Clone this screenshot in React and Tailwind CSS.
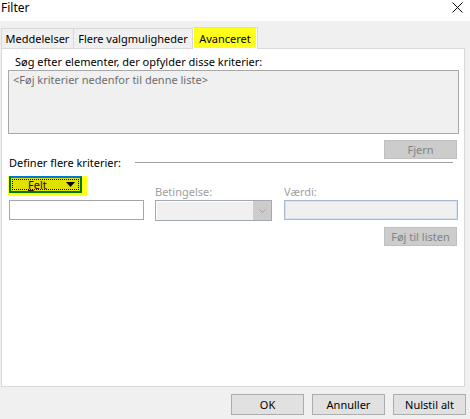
import React from "react";

const font = { fontFamily: '"Noto Sans", "Open Sans", sans-serif' };

function DisabledButton({ children }) {
  return (
    <div className="w-[73px] h-[19px] bg-[#cccccc] border border-[#bfbfbf] flex items-center justify-center text-[11px] leading-[15px] text-[#838383]">
      {children}
    </div>
  );
}

function Button({ children }) {
  return (
    <div className="w-[73px] h-[21px] bg-[#e1e1e1] border border-[#adadad] flex items-center justify-center text-[11px] leading-[15px] text-black">
      {children}
    </div>
  );
}

export default function App() {
  return (
    <div
      className="w-[470px] h-[419px] bg-[#f0f0f0] flex flex-col overflow-hidden text-black"
      style={font}
    >
      {/* Title bar */}
      <div className="h-[21px] bg-white flex items-start justify-between pl-[1px] pr-[7px] shrink-0">
        <span className="text-[12px] leading-[15px]">Filter</span>
        <svg width="11" height="11" viewBox="0 0 11 11" className="mt-[2px]">
          <path d="M0.5 0.5 L10.5 10.5 M10.5 0.5 L0.5 10.5" stroke="#000" strokeWidth="1" />
        </svg>
      </div>

      {/* Tabs */}
      <div className="flex items-end h-[27px] pl-[1px] shrink-0 relative z-10">
        <div className="h-[20px] w-[73px] border border-[#d9d9d9] border-b-0 bg-[#f0f0f0] flex items-center justify-center text-[11px] leading-[15px]">
          Meddelelser
        </div>
        <div className="h-[20px] w-[119px] border border-[#d9d9d9] border-b-0 border-l-0 bg-[#f0f0f0] flex items-center justify-center text-[11px] leading-[15px]">
          Flere valgmuligheder
        </div>
        <div className="h-[22px] w-[65px] border border-[#d9d9d9] border-b-0 border-l-0 bg-white flex items-start mb-[-1px]">
          <div className="h-[20px] w-[62px] ml-[1px] bg-[#ffff1a] flex items-center justify-center text-[11px] leading-[15px]">
            Avanceret
          </div>
        </div>
      </div>

      {/* Panel */}
      <div className="ml-[1px] w-[464px] h-[339px] bg-white border border-[#d9d9d9] shrink-0 flex flex-col">
        <div className="ml-[13px] mt-[5px] text-[11px] leading-[15px]">
          Søg efter elementer, der opfylder disse kriterier:
        </div>
        <div className="ml-[6px] mt-[1px] w-[451px] h-[64px] bg-[#f0f0f0] border border-[#a8a8a8] px-[4px] pt-[1px] text-[11px] leading-[15px] text-[#6d6d6d]">
          &lt;Føj kriterier nedenfor til denne liste&gt;
        </div>
        <div className="flex justify-end pr-[7px] mt-[6px]">
          <DisabledButton>Fjern</DisabledButton>
        </div>
        <div className="flex items-center ml-[7px] mr-[11px] mt-[-4px] h-[15px]">
          <span className="text-[11px] leading-[15px]">Definer flere kriterier:</span>
          <div className="ml-auto w-[318px] h-px bg-[#a0a0a0]"></div>
        </div>

        <div className="flex ml-[7px] mt-[6px]">
          {/* col 1 */}
          <div className="w-[135px] flex flex-col">
            <div className="w-[79px] h-[20px] bg-[#ffff1a] ml-[-1px]">
              <div className="ml-[1px] w-[73px] h-[17px] bg-[#e1e100] border-2 border-[#007800] border-t-[#0078d7] flex">
                <div className="m-[1px] flex-1 border border-dotted border-black flex items-center pl-[15px] pr-[3px]">
                  <span className="text-[11px] leading-[12px] text-[#3a0000]">
                    <span className="underline">F</span>elt
                  </span>
                  <svg width="9" height="5" viewBox="0 0 9 5" className="ml-auto">
                    <path d="M0 0 H9 L4.5 5 Z" fill="#000" />
                  </svg>
                </div>
              </div>
            </div>
            <div className="mt-[4px] w-[135px] h-[20px] border border-[#a6a6a6] bg-white"></div>
          </div>
          {/* col 2 */}
          <div className="w-[117px] ml-[11px] flex flex-col">
            <div className="h-[24px] flex items-end pb-[1px] text-[11px] leading-[15px] text-[#a0a0a0]">
              Betingelse:
            </div>
            <div className="w-[117px] h-[21px] border border-[#a3a8b7] bg-[#f0f0f0] flex">
              <div className="flex-1 border-t border-l border-white"></div>
              <div className="w-[18px] bg-[#cccccc] flex items-center justify-center">
                <svg width="7" height="4" viewBox="0 0 7 4">
                  <path d="M0.5 0.5 L3.5 3.5 L6.5 0.5" stroke="#a0a0a0" strokeWidth="1" fill="none" />
                </svg>
              </div>
            </div>
          </div>
          {/* col 3 */}
          <div className="w-[174px] ml-[12px] flex flex-col">
            <div className="h-[24px] flex items-end pb-[1px] text-[11px] leading-[15px] text-[#a0a0a0]">
              Værdi:
            </div>
            <div className="w-[174px] h-[20px] border border-[#a9b7cf] bg-[#f0f0f0]">
              <div className="w-full h-full border border-[#d5e3f3]"></div>
            </div>
            <div className="flex justify-end mt-[7px] mr-[1px]">
              <DisabledButton>Føj til listen</DisabledButton>
            </div>
          </div>
        </div>
      </div>

      {/* Bottom buttons */}
      <div className="flex justify-end gap-[8px] pr-[4px] mt-[7px]">
        <Button>OK</Button>
        <Button>Annuller</Button>
        <Button>Nulstil alt</Button>
      </div>
    </div>
  );
}
